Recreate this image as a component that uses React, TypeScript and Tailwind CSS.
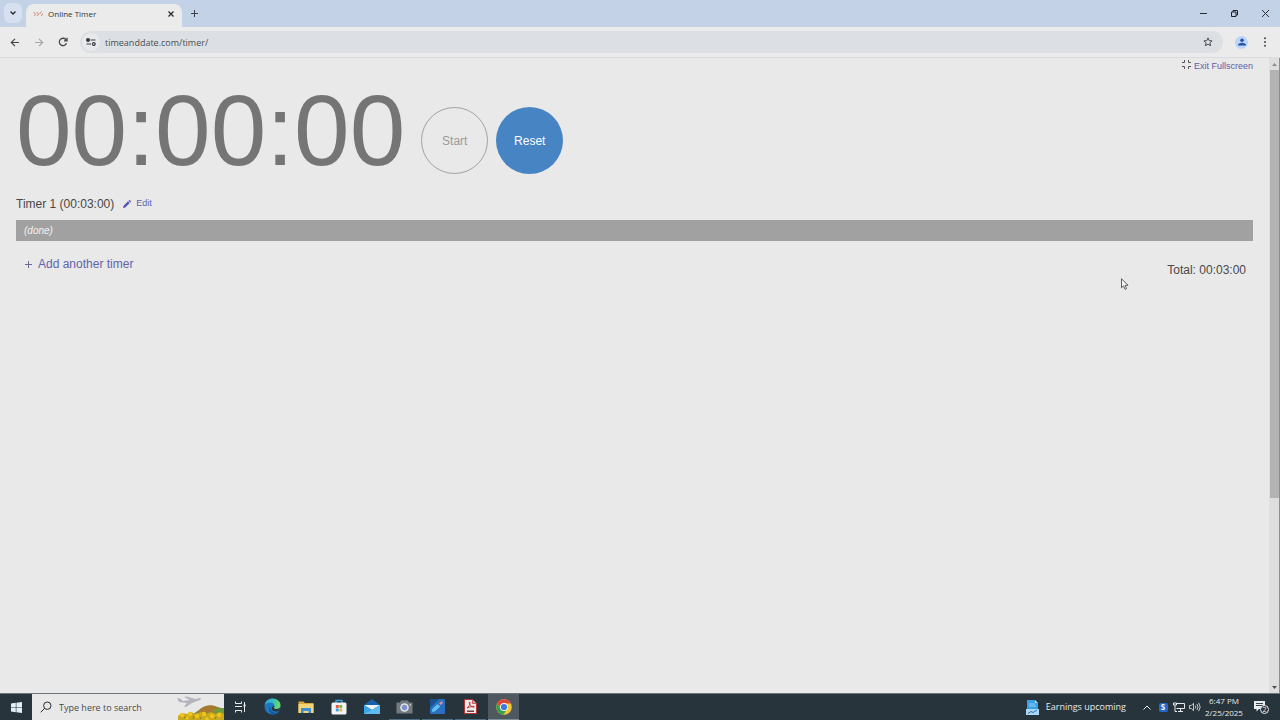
import type { ReactNode } from 'react';

interface Timer {
  id: number;
  name: string;
  duration: string;
  done: boolean;
}

interface TaskbarApp {
  name: string;
  icon: ReactNode;
  state?: 'running' | 'active';
}

const timers: Timer[] = [{ id: 1, name: 'Timer 1', duration: '00:03:00', done: true }];

const apps: TaskbarApp[] = [
  { name: 'Task View', icon: <TaskViewIcon /> },
  { name: 'Microsoft Edge', icon: <EdgeIcon /> },
  { name: 'File Explorer', icon: <FolderIcon /> },
  { name: 'Microsoft Store', icon: <StoreIcon /> },
  { name: 'Mail', icon: <MailIcon /> },
  { name: 'Camera', icon: <CameraIcon />, state: 'running' },
  { name: 'Sketch', icon: <SketchIcon />, state: 'running' },
  { name: 'PDF Reader', icon: <PdfIcon />, state: 'running' },
  { name: 'Google Chrome', icon: <ChromeIcon />, state: 'active' },
];

function TaskViewIcon() {
  return (
    <svg width="12" height="12" viewBox="0 0 12 12" fill="none" stroke="#e8edf0">
      <path d="M1.500 .5v2h6v-2M1.500 11.500v-2h6v2M1 5.500h7M10.500 1v10" />
      <path d="M9.500 4.500h2" strokeWidth="2" />
    </svg>
  );
}

function EdgeIcon() {
  return (
    <svg width="17" height="17" viewBox="0 0 17 17">
      <defs>
        <linearGradient id="edge" x1="0" y1="0" x2="1" y2="0.3">
          <stop offset="0" stopColor="#2da3dc" />
          <stop offset="0.6" stopColor="#37c2b5" />
          <stop offset="1" stopColor="#6bd66a" />
        </linearGradient>
      </defs>
      <circle cx="8.500" cy="8.500" r="8" fill="#1d78c4" />
      <path d="M.6 7.500C1 3.500 4.300.5 8.500.5c4.500 0 8 3 8 6.500 0 2.500-1.800 4-4.200 4-1.600 0-2.600-.7-2.600-1.300 0-.5.8-.8.8-1.900C10.500 6 8.800 4.600 6.500 4.600 3.600 4.600 1.300 5.800.6 7.500z" fill="url(#edge)" />
      <path d="M6.300 8.500c-.6 3.400 2.200 6.300 5.700 6.200 1.500 0 2.600-.6 3.300-1.300-1.300 2-3.600 3.100-6.300 3.100-3.200-.6-5.400-5.600-2.700-8z" fill="#155a9c" />
      <path d="M10.500 8c0 1-.8 1.300-.8 1.800 0 .7 1 1.300 2.600 1.300 1.500 0 2.700-.5 3.400-1.400l-.3 3c-2 1.300-7.500 1.300-7.700-2.200C7.700 9 9 7.800 10.500 8z" fill="#2a363d" />
    </svg>
  );
}

function FolderIcon() {
  return (
    <svg width="16" height="14" viewBox="0 0 16 14">
      <path d="M.5 1.500h5l1.500 1.500h8.500v10H.5z" fill="#d9a93a" />
      <path d="M.5 4h15v9H.5z" fill="#f3d477" />
      <path d="M3 13V8h10v5h-2.500v-2h-5v2z" fill="#3f8fd2" />
    </svg>
  );
}

function StoreIcon() {
  return (
    <svg width="16" height="16" viewBox="0 0 16 16">
      <path d="M5 4V1.500h6V4" fill="none" stroke="#3aa5e3" strokeWidth="1.300" />
      <rect x=".5" y="3.500" width="15" height="12" rx="1.500" fill="#f1f3f4" />
      <path d="M4.800 6h2.900v2.900H4.800z" fill="#e8513c" />
      <path d="M8.300 6h2.900v2.900H8.300z" fill="#7cb83c" />
      <path d="M4.800 9.500h2.900v2.900H4.800z" fill="#36a1de" />
      <path d="M8.300 9.500h2.900v2.900H8.300z" fill="#f1b52d" />
    </svg>
  );
}

function MailIcon() {
  return (
    <svg width="16" height="15" viewBox="0 0 16 15">
      <path d="M0 6l8-6 8 6v9H0z" fill="#1562a8" />
      <path d="M0 6h16l-8 5z" fill="#eef3f7" />
      <path d="M0 6l8 5 8-5v9H0z" fill="#38a5e4" />
      <path d="M0 15l8-4 8-5v9z" fill="#61bdf0" />
    </svg>
  );
}

function CameraIcon() {
  return (
    <svg width="17" height="14" viewBox="0 0 17 14">
      <path d="M.5 2.500h3.500l1-2h7l1 2h3.500v11H.5z" fill="#737b80" />
      <circle cx="8.500" cy="7.500" r="4.300" fill="#dfe3ea" />
      <circle cx="8.500" cy="7.500" r="2.700" fill="#7f8fca" />
      <path d="M13.500 4h1.500v1.500h-1.500z" fill="#c3c9cc" />
    </svg>
  );
}

function SketchIcon() {
  return (
    <svg width="15" height="15" viewBox="0 0 15 15">
      <rect width="15" height="15" rx="1.500" fill="#2a6fc0" />
      <path d="M0 1.500Q0 0 1.500 0H9L0 9z" fill="#1b5390" />
      <path d="M2 12.500q-.5-2 1-3.300L7.500 5l2.800 2.500-4.600 4.300q-1.700 1.400-3.700.7z" fill="#63c0f3" />
      <path d="M9 4.500l2.800-2.300 1.200 1.200L10.800 6z" fill="#e99a83" />
    </svg>
  );
}

function PdfIcon() {
  return (
    <svg width="13" height="15" viewBox="0 0 13 15">
      <path d="M.5.5h8l4 4v10H.5z" fill="#eeeaea" stroke="#b63235" />
      <path d="M8.500.5v4h4" fill="#d8a8a8" stroke="#b63235" strokeWidth=".7" />
      <path d="M3 9c2-1.500 3.300-4 3-5.500-.2-1-1-.5-.7.600C5.700 6 7.500 8 9.700 8.200c1 .1.800-1-.4-.9C7 7.500 4.700 8.200 3 9z" fill="none" stroke="#c4282c" strokeWidth=".9" />
      <path d="M3 11.500h7v1.500H3z" fill="#70383a" />
    </svg>
  );
}

function ChromeIcon() {
  return (
    <svg width="16" height="16" viewBox="0 0 16 16">
      <circle cx="8" cy="8" r="7.800" fill="#f5c931" />
      <path d="M1.200 4.200A7.800 7.800 0 0 1 14.900 4.400H8L4.900 9.800z" fill="#e0473a" />
      <path d="M1.200 4.200l3.700 5.700L8 11.600h2.300l-3 4.100A7.800 7.800 0 0 1 1.200 4.200z" fill="#38a055" />
      <circle cx="8" cy="8" r="4" fill="#f4f6f8" />
      <circle cx="8" cy="8" r="3.100" fill="#3b78df" />
    </svg>
  );
}

function TabStrip() {
  return (
    <div className="flex h-[27px] items-end bg-[#c4d2e7]">
      <button aria-label="Search tabs" className="mb-1 ml-1 flex h-5 w-[18px] items-center justify-center rounded-md bg-[#d6e0ef]">
        <svg width="6" height="4" viewBox="0 0 6 4" fill="none" stroke="#25292e" strokeWidth="1.300">
          <path d="M.5.5L3 3 5.500.5" />
        </svg>
      </button>
      <div className="ml-1 flex h-[23px] w-[156px] items-center rounded-t-lg bg-[#ebebeb] pr-2 pb-1 pl-[7px]">
        <svg width="10" height="6" viewBox="0 0 10 6" fill="none" stroke="#d48478">
          <path d="M.5 1l2 2-1 2M3.500 1l2 2-1 2M8.500.5l-2 2.500M9.500 2.500l-1 2.500" />
        </svg>
        <span className="ml-[5px] flex-1 text-[8px] text-[#33363a]">Online Timer</span>
        <button aria-label="Close tab">
          <svg width="6" height="6" viewBox="0 0 6 6" stroke="#25292e" strokeWidth="1.200">
            <path d="M.5.5l5 5M5.500.5l-5 5" />
          </svg>
        </button>
      </div>
      <button aria-label="New tab" className="ml-2 flex h-[27px] w-[9px] items-center justify-center">
        <svg width="7" height="7" viewBox="0 0 7 7" stroke="#3b4148" strokeWidth="1">
          <path d="M3.500 0v7M0 3.500h7" />
        </svg>
      </button>
      <div className="ml-auto flex h-[27px] items-center gap-6 pr-[11px]">
        <button aria-label="Minimize">
          <svg width="7" height="7" viewBox="0 0 7 7" stroke="#2b3037">
            <path d="M0 3.500h7" />
          </svg>
        </button>
        <button aria-label="Restore">
          <svg width="7" height="7" viewBox="0 0 7 7" fill="none" stroke="#1d2025">
            <path d="M.5 2h4.500v4.500H.5zM2 2V.5h4.500V5H5" />
          </svg>
        </button>
        <button aria-label="Close">
          <svg width="7" height="7" viewBox="0 0 7 7" stroke="#2b3037">
            <path d="M0 0l7 7M7 0L0 7" />
          </svg>
        </button>
      </div>
    </div>
  );
}

function Toolbar() {
  return (
    <div className="flex h-[31px] items-center border-b border-[#d9dcdf] bg-[#ebebeb] pr-[13px] pl-[10px]">
      <div className="flex items-center gap-[14px]">
        <button aria-label="Back">
          <svg width="10" height="9" viewBox="0 0 10 9" fill="none" stroke="#44484d" strokeWidth="1.200">
            <path d="M9 4.500H1.500M5 .8L1.300 4.500 5 8.200" />
          </svg>
        </button>
        <button aria-label="Forward" disabled>
          <svg width="10" height="9" viewBox="0 0 10 9" fill="none" stroke="#a4a7ab" strokeWidth="1.200">
            <path d="M1 4.500h7.500M5 .8l3.700 3.700L5 8.200" />
          </svg>
        </button>
        <button aria-label="Reload">
          <svg width="10" height="10" viewBox="0 0 10 10" fill="none" stroke="#44484d" strokeWidth="1.300">
            <path d="M8.500 6.200A3.700 3.700 0 1 1 7.800 2.500L9 3.700M9 .8v3H6" />
          </svg>
        </button>
      </div>
      <div className="ml-3 flex h-[22px] flex-1 items-center rounded-full bg-[#dcdfe3] pr-2.5 pl-[2px]">
        <button aria-label="View site information" className="flex size-[18px] items-center justify-center rounded-full bg-[#e8e9eb]">
          <svg width="10" height="8" viewBox="0 0 10 8" fill="none" stroke="#3a3e43" strokeWidth="1.200">
            <circle cx="2" cy="2" r="1.400" fill="#3a3e43" />
            <path d="M4.500 2H9.500M.5 6H5" />
            <circle cx="7.800" cy="6" r="1.400" />
          </svg>
        </button>
        <input
          type="text"
          aria-label="Address"
          defaultValue="timeanddate.com/timer/"
          className="ml-[5px] h-4 min-w-0 flex-1 bg-transparent text-[9px] text-[#4a4e53] outline-none"
        />
        <button aria-label="Bookmark this tab">
          <svg width="10" height="10" viewBox="0 0 10 10" fill="none" stroke="#484c51">
            <path d="M5 .9l1.200 2.700 2.900.3-2.200 1.900.7 2.900L5 7.200 2.400 8.700l.7-2.900L.9 3.900l2.900-.3z" />
          </svg>
        </button>
      </div>
      <button aria-label="Profile" className="ml-3 flex size-[13px] items-center justify-center rounded-full bg-[#bcd4f7]">
        <svg width="8" height="8" viewBox="0 0 8 8" fill="#2352ad">
          <circle cx="4" cy="2.200" r="1.800" />
          <path d="M0 7.500V6.600Q1.500 4.800 4 4.800t4 1.800v.9z" />
        </svg>
      </button>
      <button aria-label="Menu" className="ml-[15px]">
        <svg width="4" height="10" viewBox="0 0 4 10" fill="#44484d">
          <circle cx="2" cy="1.200" r="1" />
          <circle cx="2" cy="5" r="1" />
          <circle cx="2" cy="8.800" r="1" />
        </svg>
      </button>
    </div>
  );
}

function TimerRow({ timer }: { timer: Timer }) {
  return (
    <section>
      <div className="flex h-4 items-center">
        <h2 className="text-xs text-[#484848]">
          {timer.name} ({timer.duration})
        </h2>
        <a href="#edit" className="ml-[9px] flex items-center gap-[5px] text-[9px] text-[#6264ad]">
          <svg width="8" height="8" viewBox="0 0 8 8" fill="#5355b5">
            <path d="M0 8l.6-2.300L5 1.300 6.700 3 2.300 7.400zM5.500.8l.6-.6q.4-.4.800 0l.9.900q.4.400 0 .8l-.6.600z" />
          </svg>
          Edit
        </a>
      </div>
      <div className="mt-2 h-[21px] bg-[#a1a1a1] px-2 text-[10px] leading-[21px] text-[#f2f2f2] italic">
        {timer.done && '(done)'}
      </div>
    </section>
  );
}

function ScrollBar() {
  return (
    <div className="flex w-[11px] flex-col border-r border-[#8d8d8d] bg-[#dedede]">
      <div className="flex h-3 items-center justify-center">
        <svg width="5" height="3" viewBox="0 0 5 3" fill="#8b8b8b">
          <path d="M0 3L2.500 0 5 3z" />
        </svg>
      </div>
      <div className="flex flex-1 flex-col">
        <div className="ml-px h-[70%] bg-[#b3b3b3]" />
      </div>
      <div className="flex h-3 items-center justify-center">
        <svg width="5" height="3" viewBox="0 0 5 3" fill="#505050">
          <path d="M0 0l2.500 3L5 0z" />
        </svg>
      </div>
    </div>
  );
}

function SearchArt() {
  return (
    <svg width="48" height="26" viewBox="0 0 48 26">
      <path d="M1 4l3 .5 3 2.500 7-1L8 3l3-.5L19 5l5-1q2 .5 0 2L16 9l-6 4-2-.5 3-3.500-8-1z" fill="#b4b4c0" />
      <path d="M17 20q6-4 10-7 6-3 12-1l9 3v11H17z" fill="#8b8a3a" />
      <path d="M24 15q8-5 14-3l4 2-6 4-12 2z" fill="#a9792f" />
      <path d="M38 15l10-1v5l-7 1z" fill="#6d9c3f" />
      <path d="M2 26v-4l4-3 5 1 4-2 5 2 5-2 5 2 5-2 5 2 4-2 4 2v8z" fill="#c9a91d" />
      <g fill="#f0c419">
        <circle cx="6" cy="21" r="2.200" />
        <circle cx="14" cy="20" r="2.200" />
        <circle cx="21" cy="22" r="2.200" />
        <circle cx="28" cy="20" r="2.200" />
        <circle cx="36" cy="22" r="2.200" />
        <circle cx="43" cy="21" r="2.200" />
        <circle cx="11" cy="24" r="1.800" />
        <circle cx="31" cy="25" r="1.800" />
      </g>
      <path d="M8 24l2-1M17 25l1-3M25 25l-1-2M39 25l1-2" stroke="#778428" />
    </svg>
  );
}

function AppButton({ app }: { app: TaskbarApp }) {
  const stateClass =
    app.state === 'active'
      ? 'border-[#7d8f9c] bg-[#4e585e]'
      : app.state === 'running'
        ? 'border-[#50708a]'
        : 'border-transparent';

  return (
    <button aria-label={app.name} className="flex h-full w-[33px] justify-center px-px first:w-8">
      <span className={`flex h-full w-full items-center justify-center border-b ${stateClass}`}>{app.icon}</span>
    </button>
  );
}

function Taskbar() {
  return (
    <footer className="flex h-[27px] items-center border-t border-[#6d757a] bg-[#28343b] text-[#e6eaec]">
      <button aria-label="Start menu" className="flex h-full w-8 items-center justify-center">
        <svg width="11" height="11" viewBox="0 0 11 11" fill="#e3eef6">
          <path d="M0 1.500L4.800.8v4.400H0zM5.400.7L11 0v5.200H5.400zM0 5.800h4.800v4.400L0 9.500zM5.400 5.800H11V11l-5.600-.7z" />
        </svg>
      </button>
      <label className="flex h-full w-48 items-center bg-[#e8e8e8] pl-2">
        <svg width="12" height="12" viewBox="0 0 12 12" fill="none" stroke="#2c2c2c">
          <circle cx="7.300" cy="4.700" r="3.700" />
          <path d="M4.700 7.300L.7 11.300" />
        </svg>
        <input
          type="text"
          aria-label="Search"
          placeholder="Type here to search"
          className="ml-[7px] h-5 min-w-0 flex-1 bg-transparent text-[9px] outline-none placeholder:text-[#4b4b4b]"
        />
        <SearchArt />
      </label>
      <nav aria-label="Apps" className="flex h-full">
        {apps.map((app) => (
          <AppButton key={app.name} app={app} />
        ))}
      </nav>
      <div className="ml-auto flex h-full items-center pr-[14px]">
        <button className="flex items-center gap-[7px] text-[9px]">
          <svg width="13" height="15" viewBox="0 0 13 15">
            <path d="M1 0h8l3 3v8H1z" fill="#3aa0e6" />
            <path d="M9 0v3h3z" fill="#a9d8f7" />
            <path d="M3 4h6M3 6h7" stroke="#8fcdf7" />
            <path d="M0 9h13v6H0z" fill="#aad7f3" />
            <path d="M2 13.500l3-2 2 1 4-2.500" fill="none" stroke="#2574b8" />
          </svg>
          Earnings upcoming
        </button>
        <div className="ml-[15px] flex items-center gap-1">
          <button aria-label="Show hidden icons" className="flex w-3 justify-center">
            <svg width="8" height="5" viewBox="0 0 8 5" fill="none" stroke="#e6eaec">
              <path d="M.5 4.500L4 1l3.500 3.500" />
            </svg>
          </button>
          <span className="flex w-3 justify-center">
            <span className="flex size-[9px] items-center justify-center rounded-xs bg-[#2469cd] text-[8px] leading-none font-bold text-white">S</span>
          </span>
          <svg width="12" height="10" viewBox="0 0 12 10" fill="none" stroke="#e6eaec">
            <path d="M4 1.500h7.500v5H3.500M7.500 6.500v2.500M5 9.500h5M.5 1h3v2h-3zM2 3v6.500h2" />
          </svg>
          <svg width="12" height="10" viewBox="0 0 12 10" fill="none" stroke="#e6eaec">
            <path d="M.5 3.500h1.800L4.500 1.300v7.400L2.300 6.500H.5zM6.300 3.500q1 1.500 0 3M8 2q2 3 0 6M9.700.8q3 4.200 0 8.400" strokeWidth=".8" />
          </svg>
        </div>
        <time className="ml-[3px] w-10 text-center text-[8px] leading-[12px]">
          6:47 PM
          <br />
          2/25/2025
        </time>
        <button aria-label="2 notifications" className="relative ml-[10px] pb-px">
          <svg width="12" height="12" viewBox="0 0 12 12">
            <path d="M0 0h11v8H5L2.500 10.500V8H0z" fill="#e6eaec" />
            <path d="M2 2.500h7M2 4.500h7" stroke="#39454c" />
          </svg>
          <span className="absolute top-1 left-1.5 flex size-[9px] items-center justify-center rounded-full border border-[#e6eaec] bg-[#28343b] text-[7px] leading-none">2</span>
        </button>
      </div>
    </footer>
  );
}

export default function App() {
  return (
    <div className="flex min-h-screen flex-col bg-[#e9e9e9] font-['Open_Sans','Noto_Sans',sans-serif]">
      <header>
        <TabStrip />
        <Toolbar />
      </header>
      <div className="flex flex-1">
        <main className="relative flex-1 px-4 font-['Liberation_Sans',Arial,sans-serif]">
          <div className="flex h-4 items-center justify-end">
            <a href="#exit" className="flex items-start gap-[3px] text-[9px] leading-3 text-[#5c5ea8]">
              <svg width="9" height="9" viewBox="0 0 9 9" fill="none" stroke="#55565c">
                <path d="M0 2.500h2.500V0M6.500 0v2.500H9M0 6.500h2.500V9M6.500 9V6.500H9" />
              </svg>
              Exit Fullscreen
            </a>
          </div>
          <div className="mt-[6px] flex items-end gap-4">
            <div role="timer" className="text-[100px] leading-[100px] text-[#757575]">
              00:00:00
            </div>
            <div className="flex gap-2 pb-[6px]">
              <button disabled className="size-[67px] rounded-full border border-[#a3a3a3] text-xs text-[#9b9b9b]">
                Start
              </button>
              <button className="size-[67px] rounded-full bg-[#4784c3] text-xs text-white">Reset</button>
            </div>
          </div>
          <div className="mt-4">
            {timers.map((timer) => (
              <TimerRow key={timer.id} timer={timer} />
            ))}
          </div>
          <div className="mt-[15px] flex justify-between text-xs">
            <a href="#add" className="flex h-4 items-center gap-[6px] pl-[9px] text-[#6264ad]">
              <svg width="7" height="7" viewBox="0 0 7 7" stroke="#6a6b9c">
                <path d="M3.500 0v7M0 3.500h7" />
              </svg>
              Add another timer
            </a>
            <p className="pt-[6px] pr-[7px] text-[#484848]">Total: 00:03:00</p>
          </div>
          <svg className="absolute top-[220px] right-[140px]" width="8" height="12" viewBox="0 0 8 12" fill="#f4f4f4" stroke="#3c3c3c" strokeWidth=".8">
            <path d="M.5.800v9l2-1.900 1.500 3.400 1.500-.7L4.100 7.300h3z" />
          </svg>
        </main>
        <ScrollBar />
      </div>
      <Taskbar />
    </div>
  );
}
